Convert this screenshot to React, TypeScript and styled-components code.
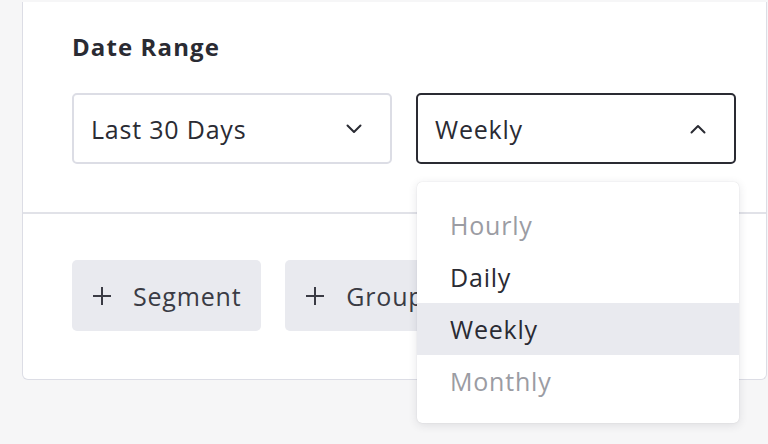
import React from 'react'
import styled, { createGlobalStyle } from 'styled-components'

const GlobalStyle = createGlobalStyle`
  html, body {
    margin: 0;
    padding: 0;
    background: #f6f6f7;
    font-family: 'Open Sans', 'Noto Sans', sans-serif;
    color: #2a2b33;
  }
`

const Page = styled.div`
  padding: 2px 1px 0 22px;
  height: 442px;
  overflow: hidden;
`

const Card = styled.div`
  background: #fff;
  border: 1px solid #dcdde5;
  border-top: 0;
  border-radius: 0 0 6px 6px;
`

const Section = styled.div<{ $top: number; $bottom: number }>`
  padding: ${p => p.$top}px 49px ${p => p.$bottom}px;
  & + & {
    border-top: 2px solid #e1e2e8;
  }
`

const Heading = styled.h2`
  margin: 0 0 34px;
  font-size: 24px;
  line-height: 24px;
  font-weight: 700;
  letter-spacing: 1.1px;
`

const Row = styled.div`
  display: flex;
  gap: 24px;
`

const SelectWrap = styled.div`
  position: relative;
`

const SelectBox = styled.div<{ $open?: boolean }>`
  box-sizing: border-box;
  width: 320px;
  height: 71px;
  display: flex;
  align-items: center;
  justify-content: space-between;
  padding: 0 28px 0 17px;
  border: ${p => (p.$open ? '2px solid #2a2b33' : '2px solid #dcdde5')};
  border-radius: 5px;
  font-size: 25px;
  letter-spacing: 0.8px;
`

const Menu = styled.ul`
  position: absolute;
  top: 89px;
  left: 1px;
  width: 322px;
  margin: 0;
  padding: 17px 0 16px;
  list-style: none;
  background: #fff;
  border-radius: 5px;
  box-shadow: 0 2px 10px rgba(40, 42, 60, 0.12), 0 0 1px rgba(40, 42, 60, 0.2);
  z-index: 2;
`

const MenuItem = styled.li<{ $muted?: boolean; $active?: boolean }>`
  height: 52px;
  display: flex;
  align-items: center;
  padding-left: 33px;
  font-size: 25px;
  letter-spacing: 0.8px;
  color: ${p => (p.$muted ? '#9b9ca3' : '#2a2b33')};
  background: ${p => (p.$active ? '#e9eaef' : 'transparent')};
`

const ActionButton = styled.button`
  height: 71px;
  display: flex;
  align-items: center;
  gap: 21px;
  padding: 0 20px;
  border: 0;
  border-radius: 5px;
  background: #e9eaef;
  color: #3a3b44;
  font-family: inherit;
  font-size: 25px;
  letter-spacing: 0.8px;
`

const Chevron = ({ up }: { up?: boolean }) => (
  <svg width="16" height="10" viewBox="0 0 16 10" fill="none">
    <path
      d={up ? 'M1.5 8.5 8 2l6.5 6.5' : 'M1.5 1.5 8 8l6.5-6.5'}
      stroke="#2a2b33"
      strokeWidth="2"
      strokeLinecap="round"
      strokeLinejoin="round"
    />
  </svg>
)

const Plus = () => (
  <svg width="20" height="20" viewBox="0 0 20 20" fill="none">
    <path d="M10 1v18M1 10h18" stroke="#3a3b44" strokeWidth="2" />
  </svg>
)

const options = [
  { label: 'Hourly', muted: true },
  { label: 'Daily' },
  { label: 'Weekly', active: true },
  { label: 'Monthly', muted: true },
]

const App: React.FC = () => {
  return (
    <Page>
      <GlobalStyle />
      <Card>
        <Section $top={33} $bottom={48}>
          <Heading>Date Range</Heading>
          <Row>
            <SelectWrap>
              <SelectBox>
                Last 30 Days
                <Chevron />
              </SelectBox>
            </SelectWrap>
            <SelectWrap>
              <SelectBox $open>
                Weekly
                <Chevron up />
              </SelectBox>
              <Menu>
                {options.map(o => (
                  <MenuItem key={o.label} $muted={o.muted} $active={o.active}>
                    {o.label}
                  </MenuItem>
                ))}
              </Menu>
            </SelectWrap>
          </Row>
        </Section>
        <Section $top={46} $bottom={48}>
          <Row>
            <ActionButton>
              <Plus />
              Segment
            </ActionButton>
            <ActionButton>
              <Plus />
              Group by
            </ActionButton>
          </Row>
        </Section>
      </Card>
    </Page>
  )
}

export default App
